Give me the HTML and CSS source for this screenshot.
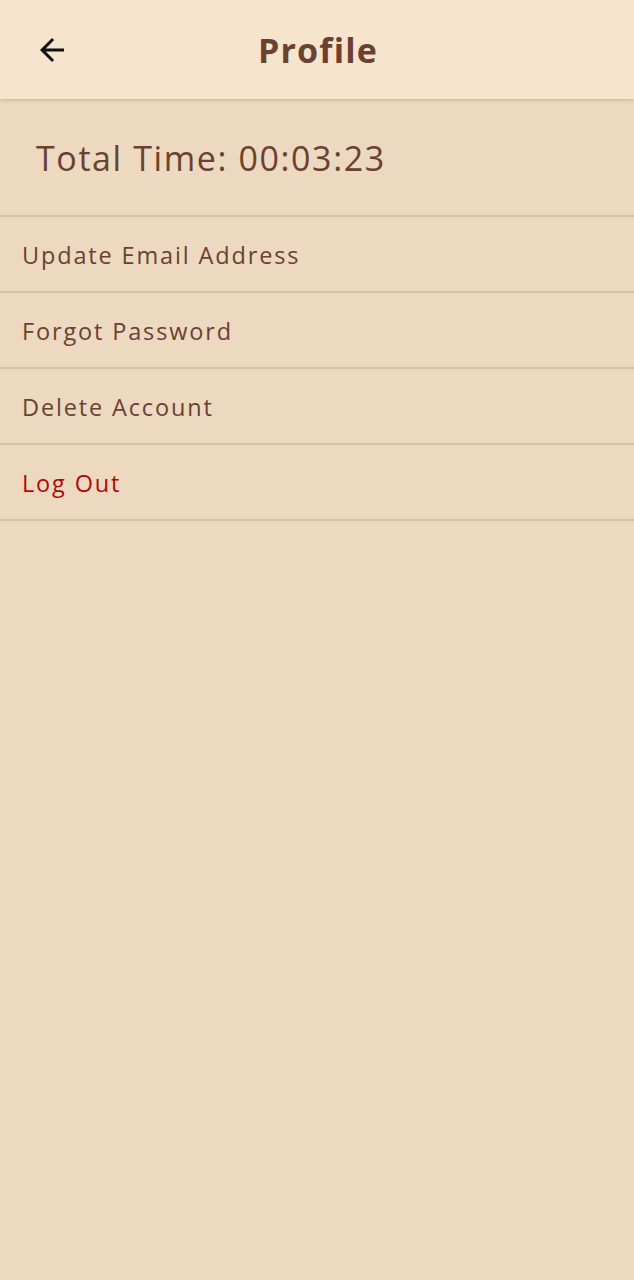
FILE: index.html
```html
<!DOCTYPE html>
<html lang="en">
<head>
<meta charset="utf-8">
<meta name="viewport" content="width=device-width, initial-scale=1">
<title>Profile</title>
<link rel="stylesheet" href="styles.css">
</head>
<body>
<header class="app-bar">
  <button class="back" aria-label="Back">
    <svg viewBox="0 0 24 24" width="36" height="36"><path d="M20 11H7.83l5.59-5.59L12 4l-8 8 8 8 1.41-1.41L7.83 13H20v-2z" fill="#111"/></svg>
  </button>
  <h1 class="title">Profile</h1>
</header>
<main class="content">
  <section class="total">Total Time: 00:03:23</section>
  <ul class="menu">
    <li class="item">Update Email Address</li>
    <li class="item">Forgot Password</li>
    <li class="item">Delete Account</li>
    <li class="item danger">Log Out</li>
  </ul>
</main>
</body>
</html>
```
FILE: styles.css
```css
* { box-sizing: border-box; }
html, body { margin: 0; padding: 0; }
body {
  background: #ecd9c0;
  font-family: "Open Sans", "Noto Sans", sans-serif;
  color: #6b4132;
  min-height: 1280px;
}
.app-bar {
  position: relative;
  height: 99px;
  background: #f7e4cd;
  display: flex;
  align-items: center;
  justify-content: center;
  box-shadow: 0 1px 4px rgba(90, 60, 30, 0.25);
  z-index: 1;
}
.back {
  position: absolute;
  left: 34px;
  top: 32px;
  width: 36px;
  height: 36px;
  padding: 0;
  border: 0;
  background: none;
  display: flex;
}
.title {
  margin: 0 0 0 2px;
  font-size: 34px;
  font-weight: 700;
  color: #6b4132;
  letter-spacing: 1.2px;
}
.total {
  height: 118px;
  display: flex;
  align-items: center;
  padding-left: 36px;
  padding-top: 2px;
  font-size: 34px;
  letter-spacing: 1.6px;
  border-bottom: 2px solid #d2c3ad;
}
.menu { list-style: none; margin: 0; padding: 0; }
.item {
  height: 76px;
  display: flex;
  align-items: center;
  padding-left: 22px;
  padding-top: 2px;
  font-size: 23.5px;
  letter-spacing: 1.85px;
  border-bottom: 2px solid #d2c3ad;
}
.danger { color: #b10a0a; }
```
